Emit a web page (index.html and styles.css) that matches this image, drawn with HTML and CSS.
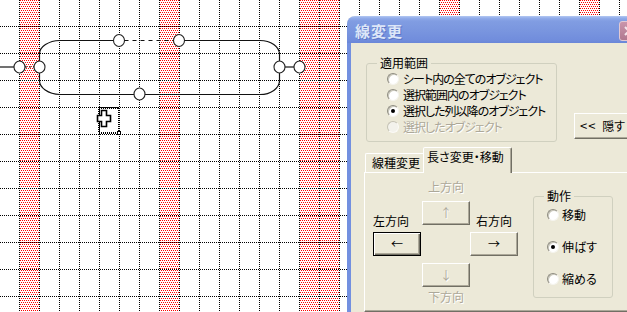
FILE: index.html
```html
<!DOCTYPE html>
<html lang="ja">
<head>
<meta charset="utf-8">
<title>線変更</title>
<link rel="stylesheet" href="styles.css">
</head>
<body>
<div class="screen">
  <svg class="sheet" width="627" height="312" viewBox="0 0 627 312">
    <defs>
      <pattern id="hatch" width="4" height="4" patternUnits="userSpaceOnUse">
        <rect x="0" y="0" width="1" height="1" fill="#ff0000" shape-rendering="crispEdges"/>
        <rect x="2" y="0" width="1" height="1" fill="#ff0000" shape-rendering="crispEdges"/>
        <rect x="1" y="2" width="1" height="1" fill="#ff0000" shape-rendering="crispEdges"/>
        <rect x="3" y="2" width="1" height="1" fill="#ff0000" shape-rendering="crispEdges"/>
        <rect x="1" y="1" width="1" height="1" fill="#ff7070" shape-rendering="crispEdges" opacity="0"/>
      </pattern>
    </defs>
    <rect width="627" height="312" fill="#ffffff"/>
    <g fill="url(#hatch)" shape-rendering="crispEdges">
      <rect x="19" y="0" width="21" height="312"/>
      <rect x="159" y="0" width="21" height="312"/>
      <rect x="299" y="0" width="41" height="312"/>
      <rect x="439" y="0" width="21" height="312"/>
      <rect x="579" y="0" width="21" height="312"/>
    </g>
    <path stroke="#000" stroke-width="1" stroke-dasharray="1 1" fill="none" shape-rendering="crispEdges"
      d="M19.5 0V312M39.5 0V312M59.5 0V312M79.5 0V312M99.5 0V312M119.5 0V312M139.5 0V312M159.5 0V312M179.5 0V312M199.5 0V312M219.5 0V312M239.5 0V312M259.5 0V312M279.5 0V312M299.5 0V312M319.5 0V312M339.5 0V312M359.5 0V312M379.5 0V312M399.5 0V312M419.5 0V312M439.5 0V312M459.5 0V312M479.5 0V312M499.5 0V312M519.5 0V312M539.5 0V312M559.5 0V312M579.5 0V312M599.5 0V312M619.5 0V312"/>
    <path stroke="#000" stroke-width="1" stroke-dasharray="1 1" fill="none" shape-rendering="crispEdges"
      d="M0 26.5H627M0 53.5H627M0 80.5H627M0 107.5H627M0 134.5H627M0 161.5H627M0 188.5H627M0 215.5H627M0 242.5H627M0 269.5H627M0 296.5H627"/>
    <!-- connector shape -->
    <g fill="none" stroke="#111" stroke-width="1.2">
      <path d="M119 40.5H60A21 13.5 0 0 0 39.5 54V80A21 14 0 0 0 60 94.5H260A19.5 14 0 0 0 279.5 80.5V54.5A19.5 14 0 0 0 260 40.5H179"/>
      <path d="M124.5 40.5H174" stroke-dasharray="4 4"/>
      <path d="M0 67H14"/>
      <path d="M25 67H34" stroke-dasharray="2 2"/>
      <path d="M284.5 67H294"/>
    </g>
    <g fill="#fff" stroke="#222" stroke-width="1.1">
      <ellipse cx="119" cy="40.5" rx="5.5" ry="6"/>
      <ellipse cx="179" cy="40.5" rx="5.5" ry="6"/>
      <ellipse cx="19.5" cy="67" rx="5.5" ry="6"/>
      <ellipse cx="39.5" cy="67" rx="5.5" ry="6"/>
      <ellipse cx="279.5" cy="67" rx="5.5" ry="6"/>
      <ellipse cx="299.5" cy="67" rx="5.5" ry="6"/>
      <ellipse cx="139.5" cy="94" rx="5.5" ry="6"/>
    </g>
    <!-- selected small shape with cursor -->
    <rect x="99" y="108" width="20" height="25" fill="none" stroke="#000" stroke-width="2" stroke-dasharray="1 1" shape-rendering="crispEdges"/>
    <rect x="117.5" y="131.5" width="3" height="3" fill="#fff" stroke="#000" stroke-width="1"/>
    <polygon points="101.5,110.5 106.5,110.5 106.5,115.5 110.5,115.5 110.5,121.5 106.5,121.5 106.5,126.5 101.5,126.5 101.5,121.5 97.5,121.5 97.5,115.5 101.5,115.5" fill="#fff" stroke="#000" stroke-width="1.6"/>
  </svg>

  <div class="dialog">
    <div class="titlebar">
      <span class="title">線変更</span>
      <span class="close"><svg width="12" height="12" viewBox="0 0 12 12"><path d="M2 2L10 10M10 2L2 10" stroke="#f4e6ec" stroke-width="2"/></svg></span>
    </div>
    <div class="dlg-body">
      <div class="scope-row">
        <fieldset class="group scope">
          <legend>適用範囲</legend>
          <div class="opts scope-opts">
            <div class="opt"><span class="radio"></span>シート内の全てのオブジェクト</div>
            <div class="opt"><span class="radio"></span>選択範囲内のオブジェクト</div>
            <div class="opt"><span class="radio on"></span>選択した列以降のオブジェクト</div>
            <div class="opt disabled"><span class="radio off"></span>選択したオブジェクト</div>
          </div>
        </fieldset>
        <button class="btn hide"><span class="chev">&lt;&lt;</span> 隠す</button>
      </div>
      <div class="tabs">
        <div class="tab">線種変更</div>
        <div class="tab active">長さ変更・移動</div>
      </div>
      <div class="panel">
        <div class="dpad">
          <span class="lbl up-lbl dim">上方向</span>
          <button class="btn up dim">↑</button>
          <span class="lbl left-lbl">左方向</span>
          <span class="lbl right-lbl">右方向</span>
          <button class="btn left default">←</button>
          <button class="btn right">→</button>
          <button class="btn down dim">↓</button>
          <span class="lbl down-lbl dim">下方向</span>
        </div>
        <fieldset class="group action">
          <legend>動作</legend>
          <div class="opts action-opts">
            <div class="opt"><span class="radio"></span>移動</div>
            <div class="opt"><span class="radio on"></span>伸ばす</div>
            <div class="opt"><span class="radio"></span>縮める</div>
          </div>
        </fieldset>
      </div>
    </div>
  </div>
</div>
</body>
</html>
```
FILE: styles.css
```css
html, body {
  margin: 0;
  padding: 0;
  background: #fff;
}
.screen {
  position: relative;
  width: 627px;
  height: 312px;
  overflow: hidden;
}
.sheet {
  display: block;
}
.dialog {
  position: absolute;
  left: 347px;
  top: 16px;
  width: 296px;
  height: 300px;
  background: #ece9d8;
  border-radius: 8px 0 0 0;
  overflow: hidden;
  font-family: "Noto Sans CJK JP", "Noto Sans", sans-serif;
  font-size: 12px;
  line-height: 14px;
  font-feature-settings: "palt";
  color: #000;
}
.titlebar {
  height: 27px;
  box-sizing: border-box;
  display: flex;
  align-items: flex-start;
  padding: 0 4px 0 8px;
  background: linear-gradient(#b3c8f2 0, #93adea 2px, #819de2 5px, #7a96df 14px, #718ddc 24px, #6a86d8 27px);
}
.title {
  margin-top: 7px;
  font-size: 15px;
  line-height: 16px;
  font-weight: bold;
  letter-spacing: 1px;
  color: #dce6f8;
  text-shadow: 1px 1px 0 #5d76c8;
}
.close {
  margin: 5px 0 0 auto;
  width: 20px;
  height: 20px;
  box-sizing: border-box;
  border: 1px solid #e2c9d3;
  border-radius: 3px;
  background: linear-gradient(#c995ab, #b07890);
  display: flex;
  align-items: center;
  justify-content: center;
}
.close svg {
  display: block;
}
.dlg-body {
  border-left: 4px solid #7390e0;
  padding: 14px 0 0 13px;
  height: 273px;
  box-sizing: border-box;
}
.scope-row {
  display: flex;
  align-items: flex-start;
}
.group {
  margin: 0;
  padding: 0;
  border: 1px solid #d0d0bf;
  border-radius: 3px;
  box-sizing: border-box;
  min-width: 0;
}
.group legend {
  margin-left: 10px;
  padding: 0 3px;
  line-height: 12px;
}
.scope {
  margin-left: 2px;
  width: 191px;
}
.scope-opts {
  padding: 2px 0 6px 20px;
}
.scope-opts .opt {
  letter-spacing: -1px;
}
.opt {
  display: flex;
  align-items: center;
  gap: 3px;
  height: 16px;
  white-space: nowrap;
}
.opt.disabled {
  color: #aca899;
  text-shadow: 1px 1px 0 #fff;
}
.radio {
  flex: none;
  width: 12px;
  height: 12px;
  box-sizing: border-box;
  border-radius: 50%;
  background: #fff;
  border: 1px solid;
  border-color: #8e8c80 #f5f4ee #f5f4ee #8e8c80;
  box-shadow: inset 1px 1px 0 #c9c7ba;
  position: relative;
  margin-right: 1px;
}
.radio.on::after {
  content: "";
  position: absolute;
  left: 3px;
  top: 3px;
  width: 4px;
  height: 4px;
  border-radius: 50%;
  background: #000;
}
.radio.off {
  background: #f3f2ec;
  border-color: #c4c2b4 #fbfaf6 #fbfaf6 #c4c2b4;
  box-shadow: none;
}
.btn {
  margin: 0;
  padding: 0;
  box-sizing: border-box;
  width: 48px;
  height: 24px;
  background: #ece9d8;
  border: 1px solid;
  border-color: #fff #716f64 #716f64 #fff;
  box-shadow: inset -1px -1px 0 #aca899;
  font-family: inherit;
  font-size: 12px;
  line-height: 14px;
  font-feature-settings: "palt";
  color: #000;
  display: flex;
  align-items: center;
  justify-content: center;
}
.btn.default {
  border-color: #000;
  box-shadow: inset 1px 1px 0 #fff, inset -1px -1px 0 #716f64, inset -2px -2px 0 #aca899;
}
.btn.dim {
  color: #aca899;
  text-shadow: 1px 1px 0 #fff;
}
.hide {
  margin: 56px 0 0 17px;
  width: 58px;
  height: 26px;
  flex: none;
  justify-content: flex-start;
  padding-left: 5px;
  white-space: pre;
}
.chev {
  font-size: 13px;
  letter-spacing: 1px;
  margin-right: 3px;
}
.tabs {
  display: flex;
  align-items: flex-end;
  margin-top: 5px;
  height: 25px;
  position: relative;
  z-index: 1;
}
.tab {
  height: 19px;
  box-sizing: border-box;
  margin-left: 1px;
  padding: 0 5px 0 6px;
  border: 1px solid;
  border-bottom: none;
  border-color: #fff #716f64 transparent #fff;
  border-radius: 2px 2px 0 0;
  display: flex;
  align-items: center;
  white-space: nowrap;
}
.tab.active {
  height: 26px;
  margin-left: -3px;
  margin-bottom: -1px;
  padding: 2px 7px 0 3px;
  align-items: flex-start;
  background: #ece9d8;
  box-shadow: inset -1px 0 0 #aca899;
}
.panel {
  width: 300px;
  height: 140px;
  box-sizing: border-box;
  border: 1px solid;
  border-color: #fff #716f64 #716f64 #fff;
  box-shadow: inset -1px -1px 0 #aca899;
  padding: 1px 0 0 8px;
  display: flex;
  align-items: flex-start;
}
.dpad {
  display: grid;
  grid-template-columns: 49px 48px 48px;
  grid-template-rows: 20px 24px 24px 24px 17px;
  row-gap: 7px;
}
.lbl {
  white-space: nowrap;
}
.dim {
  color: #aca899;
  text-shadow: 1px 1px 0 #fff;
}
.up-lbl {
  grid-column: 2;
  grid-row: 1;
  justify-self: center;
  align-self: end;
}
.up {
  grid-column: 2;
  grid-row: 2;
}
.left-lbl {
  grid-column: 1;
  grid-row: 2;
  justify-self: start;
  align-self: end;
  margin-bottom: -3px;
}
.right-lbl {
  grid-column: 3;
  grid-row: 2;
  justify-self: center;
  align-self: end;
  margin-bottom: -3px;
}
.left {
  grid-column: 1;
  grid-row: 3;
}
.right {
  grid-column: 3;
  grid-row: 3;
}
.down {
  grid-column: 2;
  grid-row: 4;
}
.down-lbl {
  grid-column: 2;
  grid-row: 5;
  justify-self: center;
  align-self: start;
  margin-top: -4px;
}
.action {
  margin: 16px 0 0 15px;
  width: 80px;
}
.action-opts {
  padding: 5px 0 10px 13px;
  display: flex;
  flex-direction: column;
  gap: 16px;
}
.action-opts .opt {
  gap: 2px;
}
```
